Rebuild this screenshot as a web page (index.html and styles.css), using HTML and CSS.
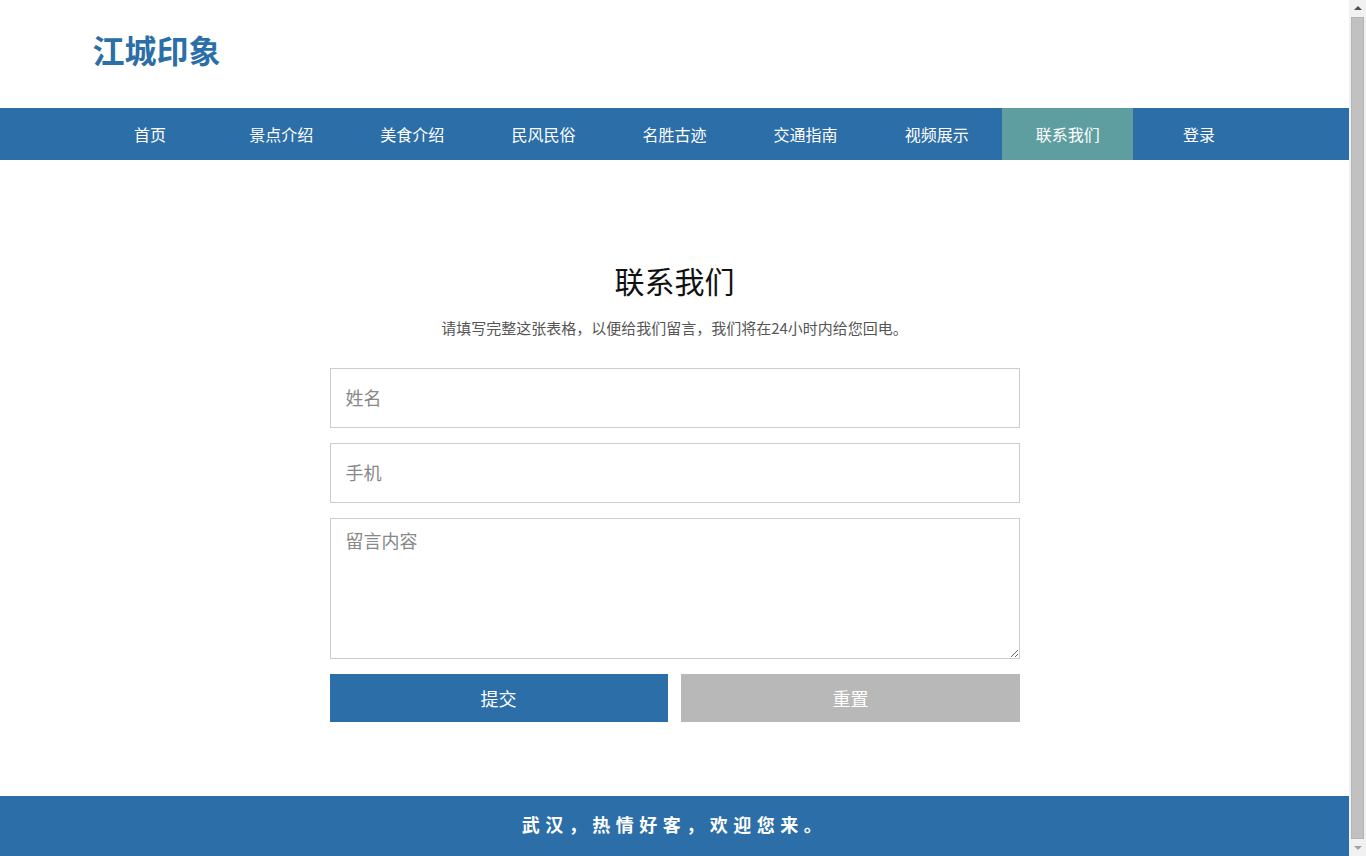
FILE: index.html
```html
<html>
	<head>
		<meta charset="utf-8">
		<title>联系我们 - 江城印象</title>
		<link rel="stylesheet" href="styles.css">
	</head>

	<body>

		<div class="Header">
			<div class="Wrap">
				<div class="Logo">江城印象</div>
			</div>
		</div>

		<div class="Nav">
			<ul class="Wrap">
				<li><a href="#">首页</a></li>
				<li><a href="#">景点介绍</a></li>
				<li><a href="#">美食介绍</a></li>
				<li><a href="#">民风民俗</a></li>
				<li><a href="#">名胜古迹</a></li>
				<li><a href="#">交通指南</a></li>
				<li><a href="#">视频展示</a></li>
				<li class="Active"><a href="#">联系我们</a></li>
				<li><a href="#">登录</a></li>
			</ul>
		</div>

		<div class="Contact">
			<h2>联系我们</h2>
			<p>请填写完整这张表格，以便给我们留言，我们将在24小时内给您回电。</p>
			<form>
				<input type="text" placeholder="姓名">
				<input type="text" placeholder="手机">
				<textarea placeholder="留言内容"></textarea>
				<div class="Buttons">
					<button type="submit" class="Submit">提交</button>
					<button type="reset" class="Reset">重置</button>
				</div>
			</form>
		</div>

		<div class="Footer">武汉，热情好客，欢迎您来。</div>

		<!-- window scrollbar as seen in the screenshot -->
		<div class="Scrollbar">
			<span class="Arrow Up"></span>
			<span class="Thumb"></span>
			<span class="Arrow Down"></span>
		</div>

	</body>
</html>
```

FILE: styles.css
```css
*{
	box-sizing: border-box;
}
body{
	margin: 0 17px 0 0;
	font-family: "Noto Sans CJK SC", "Noto Sans", sans-serif;
	color: #333;
	background: #fff;
}
.Wrap{
	width: 1180px;
	margin: 0 auto;
}
.Header{
	height: 108px;
}
.Header .Wrap{
	height: 100%;
	display: flex;
	align-items: center;
	padding-left: 8px;
	padding-bottom: 10px;
}
.Logo{
	font-size: 32px;
	font-weight: bold;
	color: #2c6ea7;
}
.Nav{
	background-color: #2c6ea7;
	height: 52px;
}
.Nav ul{
	list-style: none;
	padding: 0;
	display: flex;
	height: 100%;
}
.Nav li{
	flex: 1;
}
.Nav li a{
	display: block;
	height: 52px;
	line-height: 52px;
	text-align: center;
	color: #fff;
	text-decoration: none;
	font-size: 16px;
}
.Nav li.Active{
	background-color: cadetblue;
}
.Contact{
	width: 690px;
	margin: 0 auto;
	padding: 98px 0 74px;
	text-align: center;
}
.Contact h2{
	margin: 0;
	font-size: 30px;
	line-height: 45px;
	font-weight: normal;
	color: #111;
}
.Contact p{
	margin: 13px 0 28px;
	font-size: 15px;
	line-height: 24px;
	color: #555;
}
.Contact form{
	display: flex;
	flex-direction: column;
	gap: 15px;
	margin: 0;
}
.Contact input,
.Contact textarea{
	display: block;
	width: 100%;
	border: 1px solid #ccc;
	padding: 0 15px;
	font-family: inherit;
	font-size: 18px;
	color: #333;
	outline: none;
}
.Contact input{
	height: 60px;
	padding-bottom: 3px;
}
.Contact textarea{
	height: 141px;
	padding-top: 8px;
	resize: vertical;
}
.Contact ::placeholder{
	color: #888;
}
.Buttons{
	display: flex;
	justify-content: space-between;
}
.Buttons button{
	width: 49%;
	height: 48px;
	border: none;
	color: #fff;
	font-family: inherit;
	font-size: 18px;
	cursor: pointer;
}
.Submit{
	background-color: #2c6ea7;
}
.Reset{
	background-color: #b8b8b8;
}
.Footer{
	background-color: #2c6ea7;
	height: 62px;
	padding-top: 14px;
	text-align: center;
	color: #fff;
	font-size: 18px;
	font-weight: bold;
	letter-spacing: 5.5px;
	line-height: 28px;
}
.Scrollbar{
	position: fixed;
	top: 0;
	right: 0;
	width: 17px;
	height: 100%;
	background: #f1f1f1;
	display: flex;
	flex-direction: column;
	align-items: center;
}
.Scrollbar .Arrow{
	width: 0;
	height: 0;
	border-left: 4px solid transparent;
	border-right: 4px solid transparent;
	margin: 6px 0;
}
.Scrollbar .Up{
	border-bottom: 4px solid #505050;
}
.Scrollbar .Down{
	border-top: 4px solid #a3a3a3;
}
.Scrollbar .Thumb{
	flex: 1;
	width: 13px;
	margin: 1px 0;
	background: #c1c1c1;
	border: 1px solid #b4b4b4;
}
```
